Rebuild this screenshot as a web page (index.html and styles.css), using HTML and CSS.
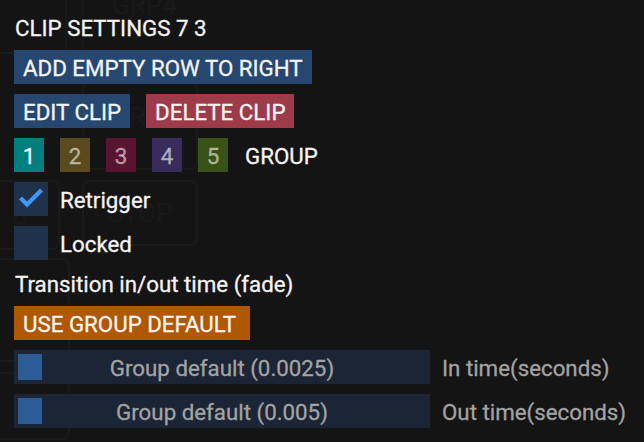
FILE: index.html
```html
<!DOCTYPE html>
<html>
<head>
<meta charset="utf-8">
<link rel="stylesheet" href="styles.css">
</head>
<body>
<div class="ghost" aria-hidden="true">
  <div class="g-vline g-v1"></div>
  <div class="g-vline g-v2"></div>
  <div class="g-hline"></div>
  <div class="g-text g-grp4">GRP4</div>
  <div class="g-box g-b1"><span class="g-text g-grp">GRP</span></div>
  <div class="g-box g-b2"><span class="g-text">8</span></div>
  <div class="g-box g-b3"><span class="g-text">STOP</span></div>
  <div class="g-box g-b4"></div>
  <div class="g-box g-b5"></div>
</div>
<div class="panel">
  <div class="title">CLIP SETTINGS 7 3</div>
  <div class="row"><div class="btn blue">ADD EMPTY ROW TO RIGHT</div></div>
  <div class="row gap16">
    <div class="btn blue">EDIT CLIP</div>
    <div class="btn red">DELETE CLIP</div>
  </div>
  <div class="row gap16">
    <div class="sw sw1">1</div>
    <div class="sw sw2">2</div>
    <div class="sw sw3">3</div>
    <div class="sw sw4">4</div>
    <div class="sw sw5">5</div>
    <div class="lbl">GROUP</div>
  </div>
  <div class="row gap12">
    <div class="cb">
      <svg width="34" height="34" viewBox="0 0 34 34"><polyline points="6.5,16 13,22.5 27.5,8" fill="none" stroke="#4296fa" stroke-width="4.2" stroke-linecap="butt" stroke-linejoin="miter"/></svg>
    </div>
    <div class="lbl">Retrigger</div>
  </div>
  <div class="row gap12">
    <div class="cb"></div>
    <div class="lbl">Locked</div>
  </div>
  <div class="text">Transition in/out time (fade)</div>
  <div class="row"><div class="btn orange">USE GROUP DEFAULT</div></div>
  <div class="row gap12">
    <div class="slider"><div class="grab"></div><span class="sval">Group default (0.0025)</span></div>
    <div class="lbl dim">In time(seconds)</div>
  </div>
  <div class="row gap12">
    <div class="slider"><div class="grab"></div><span class="sval">Group default (0.005)</span></div>
    <div class="lbl dim">Out time(seconds)</div>
  </div>
</div>
</body>
</html>
```
FILE: styles.css
```css
html, body {
  margin: 0;
  padding: 0;
  background: #141414;
  width: 644px;
  height: 442px;
  overflow: hidden;
}
body {
  position: relative;
  font-family: Roboto, "Liberation Sans", sans-serif;
  font-size: 22.3px;
  color: #f4f4f4;
}
.ghost {
  position: absolute;
  inset: 0;
  z-index: 0;
}
.g-vline {
  position: absolute;
  top: 0;
  width: 2px;
  background: #161b17;
}
.g-v1 { left: 65px; height: 60px; }
.g-v2 { left: 82px; height: 60px; background: #171717; }
.g-hline {
  position: absolute;
  left: 0;
  top: 52px;
  width: 14px;
  height: 2px;
  background: #151c1d;
}
.g-text {
  color: #191919;
  font-size: 26px;
}
.g-grp4 {
  position: absolute;
  left: 112px;
  top: -10px;
}
.g-box {
  position: absolute;
  border: 2px solid #1a1a1a;
  border-radius: 8px;
  box-sizing: border-box;
  display: flex;
  align-items: center;
  justify-content: center;
}
.g-b1 { left: 82px; top: 80px; width: 116px; height: 90px; border-color: #181c15; }
.g-grp { position: absolute; left: 28px; top: 20px; }
.g-b2 { left: -20px; top: 180px; width: 80px; height: 70px; }
.g-b3 { left: 82px; top: 180px; width: 116px; height: 66px; }
.g-b4 { left: -20px; top: 258px; width: 90px; height: 104px; }
.g-b5 { left: -20px; top: 372px; width: 90px; height: 68px; }

.panel {
  position: relative;
  z-index: 1;
  padding: 16px 14px 0 14px;
  display: flex;
  flex-direction: column;
  gap: 10px;
  -webkit-text-stroke: 0.3px currentColor;
}
.title {
  height: 24px;
  line-height: 24px;
  padding-left: 1px;
}
.row {
  display: flex;
  align-items: center;
  height: 34px;
}
.gap16 { gap: 16px; }
.gap12 { gap: 12px; }
.btn {
  box-sizing: border-box;
  height: 34px;
  line-height: 32px;
  padding: 2px 9px 0 9px;
  color: #f4f4f4;
}
.blue { background: #264870; }
.red { background: #9e3b4b; }
.orange { background: #b05800; padding-right: 14px; }
.sw {
  box-sizing: border-box;
  width: 30px;
  height: 34px;
  line-height: 32px;
  padding-top: 2px;
  text-align: center;
  color: rgba(255,255,255,0.55);
}
.sw1 { background: #007f7f; color: #f4f4f4; }
.sw2 { background: #5a4a1e; }
.sw3 { background: #5a1430; }
.sw4 { background: #372c5c; }
.sw5 { background: #3a5216; }
.lbl {
  line-height: 32px;
  padding-top: 2px;
}
.sw5 + .lbl { margin-left: 1px; }
.cb {
  width: 34px;
  height: 34px;
  background: #1f314b;
}
.cb svg { display: block; }
.text {
  box-sizing: border-box;
  height: 26px;
  line-height: 24px;
  padding: 2px 0 0 1px;
}
.slider {
  position: relative;
  width: 416px;
  height: 34px;
  background: #1b2535;
  display: flex;
  align-items: center;
  justify-content: center;
}
.grab {
  position: absolute;
  left: 4px;
  top: 4px;
  width: 24px;
  height: 26px;
  background: #2d5b96;
}
.sval {
  color: #a3a3a3;
  line-height: 32px;
  padding-top: 2px;
}
.dim { color: #a3a3a3; }
```
